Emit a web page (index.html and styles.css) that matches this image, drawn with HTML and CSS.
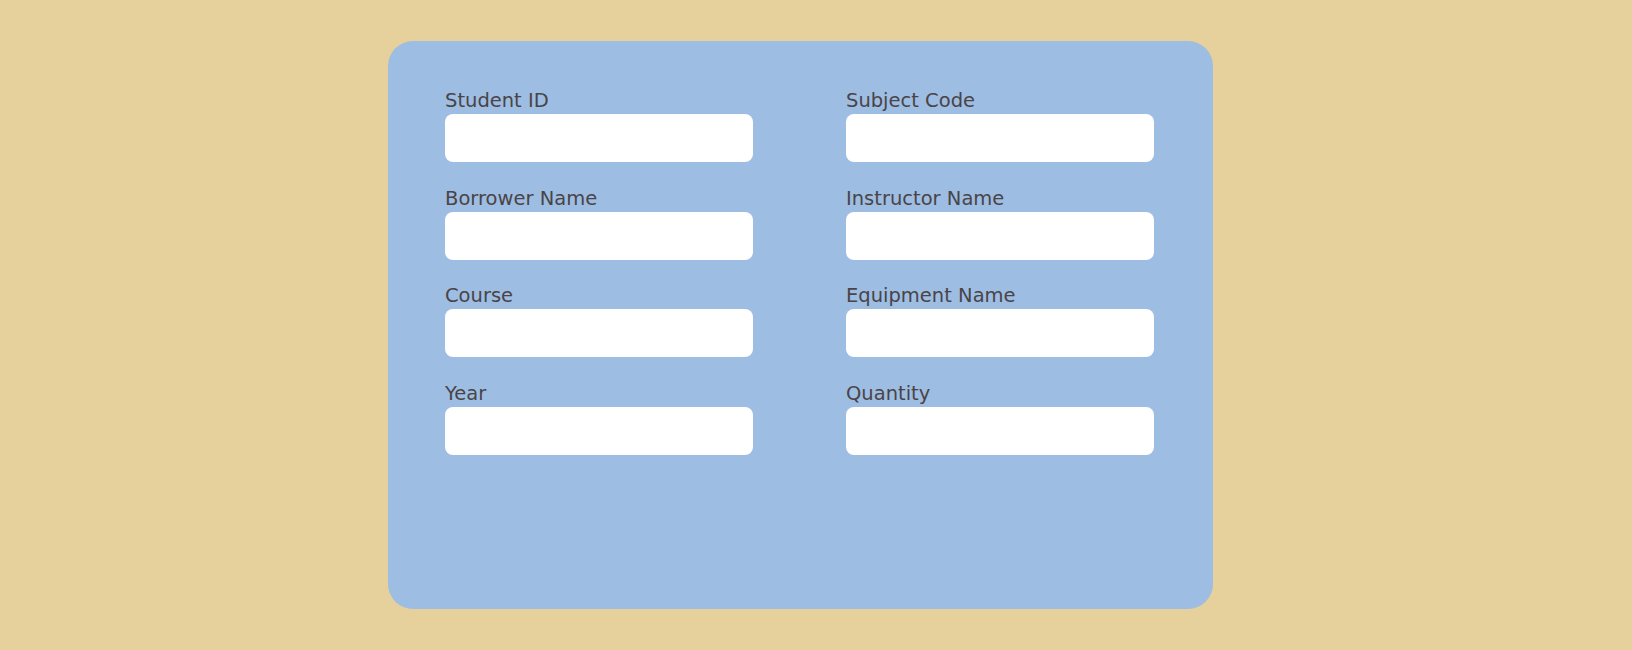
FILE: index.html
```html
<!DOCTYPE html>
<html lang="en">
<head>
<meta charset="utf-8">
<title>Borrow Form</title>
<link rel="stylesheet" href="styles.css">
</head>
<body>
<main class="page">
  <form class="card">
    <div class="grid">
      <label class="field"><span class="label">Student ID</span><input class="input" type="text"></label>
      <label class="field"><span class="label">Subject Code</span><input class="input" type="text"></label>
      <label class="field"><span class="label">Borrower Name</span><input class="input" type="text"></label>
      <label class="field"><span class="label">Instructor Name</span><input class="input" type="text"></label>
      <label class="field"><span class="label">Course</span><input class="input" type="text"></label>
      <label class="field"><span class="label">Equipment Name</span><input class="input" type="text"></label>
      <label class="field"><span class="label">Year</span><input class="input" type="text"></label>
      <label class="field"><span class="label">Quantity</span><input class="input" type="text"></label>
    </div>
  </form>
</main>
</body>
</html>
```
FILE: styles.css
```css
html, body {
  margin: 0;
  padding: 0;
  background: #e6d09b;
}
.page {
  height: 650px;
  padding: 41px 0 0 388px;
  box-sizing: border-box;
}
.card {
  width: 825px;
  height: 568px;
  box-sizing: border-box;
  background: #9dbde3;
  border-radius: 25px;
  padding: 46px 59px 0 57px;
  margin: 0;
}
.grid {
  display: grid;
  grid-template-columns: 308px 308px;
  column-gap: 93px;
  row-gap: 22.7px;
}
.field {
  display: flex;
  flex-direction: column;
}
.label {
  font-family: "DejaVu Sans", sans-serif;
  font-size: 19.5px;
  line-height: 27px;
  color: #4a4446;
}
.input {
  width: 308px;
  height: 48px;
  box-sizing: border-box;
  border: none;
  border-radius: 8px;
  background: #ffffff;
  margin: 0;
  padding: 0 12px;
  outline: none;
}
```
